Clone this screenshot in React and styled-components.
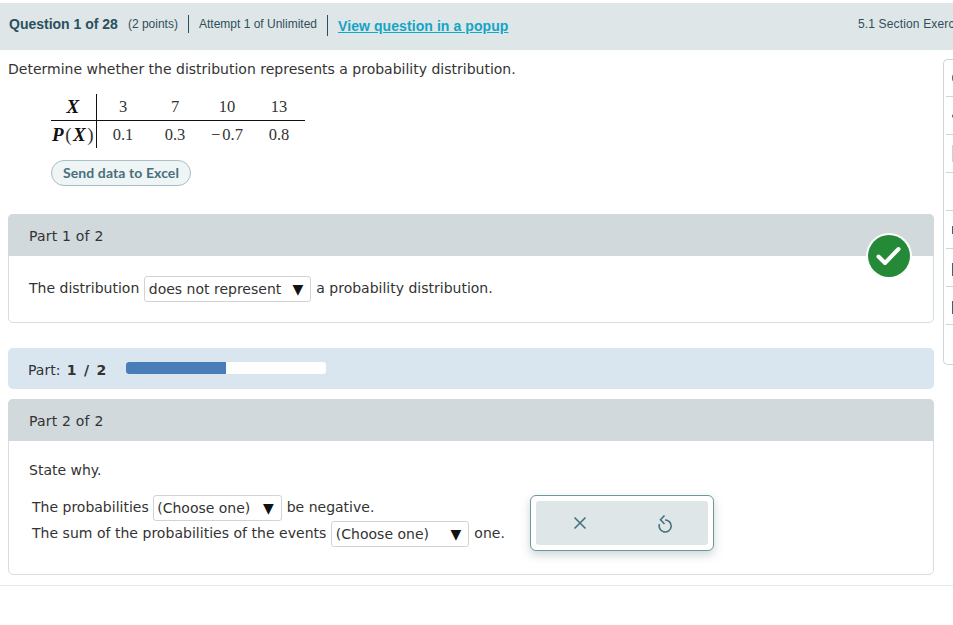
import React from "react";
import styled, { createGlobalStyle } from "styled-components";

const GlobalStyle = createGlobalStyle`
  html, body {
    margin: 0;
    padding: 0;
    background: #fff;
    overflow: hidden;
  }
  body {
    font-family: "DejaVu Sans", Verdana, sans-serif;
    font-size: 14px;
    color: #333;
  }
`;

const SIDE_ITEMS = ["circle", "dot", "box", "none", "s", "bar", "bar", "none"];

const Dropdown = ({ width, children }) => (
  <Select $width={width}>
    <span>{children}</span>
    <Arrow>▼</Arrow>
  </Select>
);

const App = () => {
  return (
    <Page>
      <GlobalStyle />
      <TopBar>
        <QuestionNo>Question 1 of 28</QuestionNo>
        <Points>(2 points)</Points>
        <Divider />
        <Attempt>Attempt 1 of Unlimited</Attempt>
        <Divider $tall />
        <PopupLink href="#">View question in a popup</PopupLink>
        <Section>5.1 Section Exercises</Section>
      </TopBar>

      <Columns>
        <Main>
          <Prompt>Determine whether the distribution represents a probability distribution.</Prompt>

          <DataTable>
            <tbody>
              <tr>
                <HeadCell>
                  <b>X</b>
                </HeadCell>
                <Cell>3</Cell>
                <Cell>7</Cell>
                <Cell>10</Cell>
                <Cell>13</Cell>
              </tr>
              <tr>
                <HeadCell>
                  <b>P</b>
                  <Paren>(</Paren>
                  <b>X</b>
                  <Paren>)</Paren>
                </HeadCell>
                <Cell>0.1</Cell>
                <Cell>0.3</Cell>
                <Cell>
                  <Minus>−</Minus>0.7
                </Cell>
                <Cell>0.8</Cell>
              </tr>
            </tbody>
          </DataTable>

          <ExcelButton>Send data to Excel</ExcelButton>

          <PartCard>
            <PartHeader>Part 1 of 2</PartHeader>
            <CheckBadge>
              <svg width="46" height="46" viewBox="0 0 46 46">
                <circle cx="23" cy="23" r="23" fill="#fff" />
                <circle cx="23" cy="23" r="21" fill="#258a38" />
                <path
                  d="M12.5 23.5 L19 30 L32.5 16"
                  fill="none"
                  stroke="#fff"
                  strokeWidth="4"
                  strokeLinecap="round"
                  strokeLinejoin="round"
                />
              </svg>
            </CheckBadge>
            <PartOneBody>
              The distribution
              <Dropdown width={167}>does not represent</Dropdown>
              a probability distribution.
            </PartOneBody>
          </PartCard>

          <ProgressBanner>
            <ProgressLabel>
              Part: <ProgressCount>1 / 2</ProgressCount>
            </ProgressLabel>
            <ProgressTrack>
              <ProgressFill style={{ width: `${(1 / 2) * 100}%` }} />
            </ProgressTrack>
          </ProgressBanner>

          <PartCard $last>
            <PartHeader>Part 2 of 2</PartHeader>
            <PartTwoBody>
              <StateWhy>State why.</StateWhy>
              <AnswerLine $gap={4}>
                The probabilities
                <Dropdown width={129}>(Choose one)</Dropdown>
                <Trailing>be negative.</Trailing>
              </AnswerLine>
              <AnswerLine $gap={5} $track={0.025}>
                The sum of the probabilities of the events
                <Dropdown width={138}>(Choose one)</Dropdown>
                one.
              </AnswerLine>
            </PartTwoBody>
            <AnswerTools>
              <ToolsInner>
                <svg width="14" height="14" viewBox="0 0 14 14" fill="none" stroke="currentColor" strokeWidth="1.6">
                  <path d="M1.5 1.5 L12.5 12.5 M12.5 1.5 L1.5 12.5" />
                </svg>
                <svg width="14" height="20" viewBox="0 -1 14 20" fill="none" stroke="currentColor" strokeWidth="1.6">
                  <path d="M7 6 A6 6 0 1 1 1.5 10" />
                  <path d="M6.5 1.5 L2.5 5.7 L6.5 10" />
                </svg>
              </ToolsInner>
            </AnswerTools>
          </PartCard>
        </Main>

        <SidePanel>
          {SIDE_ITEMS.map((kind, i) => (
            <SideItem key={i}>{kind !== "none" && <SideIcon $kind={kind} />}</SideItem>
          ))}
        </SidePanel>
      </Columns>

      <FooterRule />
    </Page>
  );
};

export default App;

const Page = styled.div`
  position: relative;
  width: 953px;
  height: 625px;
  padding-top: 3px;
  box-sizing: border-box;
  overflow: hidden;
`;

const TopBar = styled.div`
  height: 47px;
  background-color: #dfe6e7;
  display: flex;
  align-items: center;
  padding-left: 9px;
  font-family: "Liberation Sans", Arial, sans-serif;
  color: #2f4f5c;
  white-space: nowrap;
`;

const QuestionNo = styled.span`
  font-size: 14px;
  font-weight: 700;
  color: #29505f;
  margin-top: -5px;
`;

const Points = styled.span`
  font-size: 12px;
  margin-left: 10px;
  margin-top: -5px;
`;

const Divider = styled.span`
  width: 1px;
  height: ${p => (p.$tall ? "21px" : "18px")};
  background-color: #29505f;
  margin: ${p => (p.$tall ? "-3px 10px 0" : "-5px 10px 0")};
`;

const Attempt = styled.span`
  font-size: 12px;
  margin-top: -5px;
`;

const PopupLink = styled.a`
  font-size: 14px;
  font-weight: 700;
  letter-spacing: 0.08px;
  color: #12a5c6;
  text-decoration: underline;
  margin-top: -2px;
`;

const Section = styled.span`
  font-size: 12px;
  letter-spacing: 0.15px;
  margin-left: auto;
  margin-top: -5px;
  width: 95px;
  overflow: hidden;
`;

const Columns = styled.div`
  display: flex;
  align-items: flex-start;
  padding-left: 8px;
`;

const Main = styled.div`
  width: 926px;
  flex-shrink: 0;
`;

const Prompt = styled.p`
  margin: 0;
  padding-top: 11px;
  line-height: 17px;
  color: #333;
`;

const DataTable = styled.table`
  border-collapse: collapse;
  margin: 16px 0 0 43px;
  font-family: "Liberation Serif", "Times New Roman", serif;
  font-size: 16.5px;
  color: #333;

  tr:first-child td {
    border-bottom: 1px solid #111;
    height: 26px;
  }
  tr:last-child td {
    height: 27px;
  }
`;

const Cell = styled.td`
  width: 52px;
  padding: 0;
  text-align: center;
`;

const Minus = styled.span`
  margin-right: 2px;
`;

const HeadCell = styled.td`
  width: 45px;
  padding: 0;
  text-align: center;
  border-right: 1px solid #111;
  color: #111;
  white-space: nowrap;
  font-size: 19px;
  line-height: 20px;
  letter-spacing: 1.5px;

  b {
    font-style: italic;
    font-weight: 700;
  }
`;

const Paren = styled.span`
  color: #333;
`;

const ExcelButton = styled.button`
  display: block;
  width: 140px;
  height: 26px;
  margin: 12px 0 0 43px;
  padding: 0 0 2px;
  background-color: #eff4f5;
  border: 1px solid #a9bec5;
  border-radius: 13px;
  font-family: Lato, "Liberation Sans", sans-serif;
  font-size: 14px;
  font-weight: 700;
  letter-spacing: 0.1px;
  color: #47707e;
`;

const PartCard = styled.section`
  position: relative;
  margin-top: ${p => (p.$last ? "10px" : "28px")};
  border: 1px solid #d5dfe2;
  border-radius: 5px;
  background-color: #fff;
`;

const PartHeader = styled.div`
  height: 42px;
  margin: -1px -1px 0;
  padding: 2px 0 0 21px;
  box-sizing: border-box;
  display: flex;
  align-items: center;
  background-color: #d1d9dc;
  border-radius: 5px 5px 0 0;
  color: #333;
  letter-spacing: 0.2px;
`;

const CheckBadge = styled.div`
  position: absolute;
  top: 18px;
  right: 21px;
  width: 46px;
  height: 46px;

  svg {
    display: block;
  }
`;

const PartOneBody = styled.div`
  height: 66px;
  padding: 20px 0 0 20px;
  box-sizing: border-box;
  display: flex;
  align-items: flex-start;
  gap: 5px;
  line-height: 24px;
`;

const Select = styled.span`
  display: inline-flex;
  align-items: center;
  justify-content: space-between;
  width: ${p => p.$width}px;
  height: 26px;
  box-sizing: border-box;
  padding: 0 7px 0 3.5px;
  border: 1px solid #d3d3d3;
  border-radius: 3px;
  background-color: #fff;
  color: #333;
  letter-spacing: 0;
  white-space: nowrap;
`;

const Arrow = styled.span`
  font-size: 14px;
  color: #111;
  margin-top: -1px;
`;

const ProgressBanner = styled.div`
  height: 41px;
  margin-top: 25px;
  padding-left: 20px;
  display: flex;
  align-items: center;
  gap: 20px;
  background-color: #d9e5ef;
  border-radius: 5px;
  color: #333;
`;

const ProgressLabel = styled.span`
  padding-top: 2px;
`;

const ProgressCount = styled.b`
  margin-left: 2px;
  word-spacing: 2.5px;
`;

const ProgressTrack = styled.div`
  width: 200px;
  height: 12px;
  margin-top: -1px;
  background-color: #fff;
  border-radius: 3px;
  overflow: hidden;
`;

const ProgressFill = styled.div`
  height: 100%;
  background-color: #4a7db8;
`;

const PartTwoBody = styled.div`
  height: 133px;
  padding: 21px 0 0 20px;
  box-sizing: border-box;
`;

const StateWhy = styled.div`
  line-height: 17px;
  margin-bottom: 16px;
`;

const AnswerLine = styled.div`
  display: flex;
  align-items: flex-start;
  gap: ${p => p.$gap}px;
  height: 26px;
  padding-left: 3px;
  line-height: 24px;
  letter-spacing: ${p => p.$track || 0}px;
`;

const Trailing = styled.span`
  margin-left: 1px;
`;

const AnswerTools = styled.div`
  position: absolute;
  left: 521px;
  top: 95px;
  width: 184px;
  height: 56px;
  box-sizing: border-box;
  padding: 5px;
  background-color: #fff;
  border: 1px solid #6f959f;
  border-radius: 6px;
  box-shadow: 0 4px 10px rgba(60, 90, 100, 0.25);
`;

const ToolsInner = styled.div`
  height: 100%;
  display: flex;
  align-items: center;
  justify-content: space-around;
  padding: 0 0 0 1px;
  background-color: #dfe6e7;
  border-radius: 3px;
  color: #47707e;
`;

const SidePanel = styled.aside`
  width: 60px;
  flex-shrink: 0;
  margin: 9px 0 0 9px;
  padding: 0 0 0 2px;
  box-sizing: border-box;
  border: 1px solid #ccd6d8;
  border-right: none;
  border-radius: 5px 0 0 5px;
`;

const SideItem = styled.div`
  height: 37px;
  border-bottom: 1px solid #ccd6d8;
  display: flex;
  align-items: center;
  padding-left: 6px;

  &:first-child {
    height: 36px;
  }
  &:last-child {
    height: 39px;
    border-bottom: none;
  }
`;

const SideIcon = styled.span`
  display: block;
  flex-shrink: 0;
  background-color: ${p => (p.$kind === "box" ? "#c9d3d6" : "#3d6472")};
  width: ${p => (p.$kind === "dot" ? "4px" : p.$kind === "bar" ? "3px" : "5px")};
  height: ${p =>
    p.$kind === "dot" ? "4px" : p.$kind === "box" ? "17px" : p.$kind === "bar" ? "13px" : "8px"};
  margin-top: ${p => (p.$kind === "bar" ? "4px" : "0")};
  border-radius: ${p => (p.$kind === "dot" || p.$kind === "circle" ? "50%" : "0")};
`;

const FooterRule = styled.div`
  position: absolute;
  left: 0;
  right: 0;
  top: 585px;
  height: 1px;
  background-color: #e3e8e9;
`;
